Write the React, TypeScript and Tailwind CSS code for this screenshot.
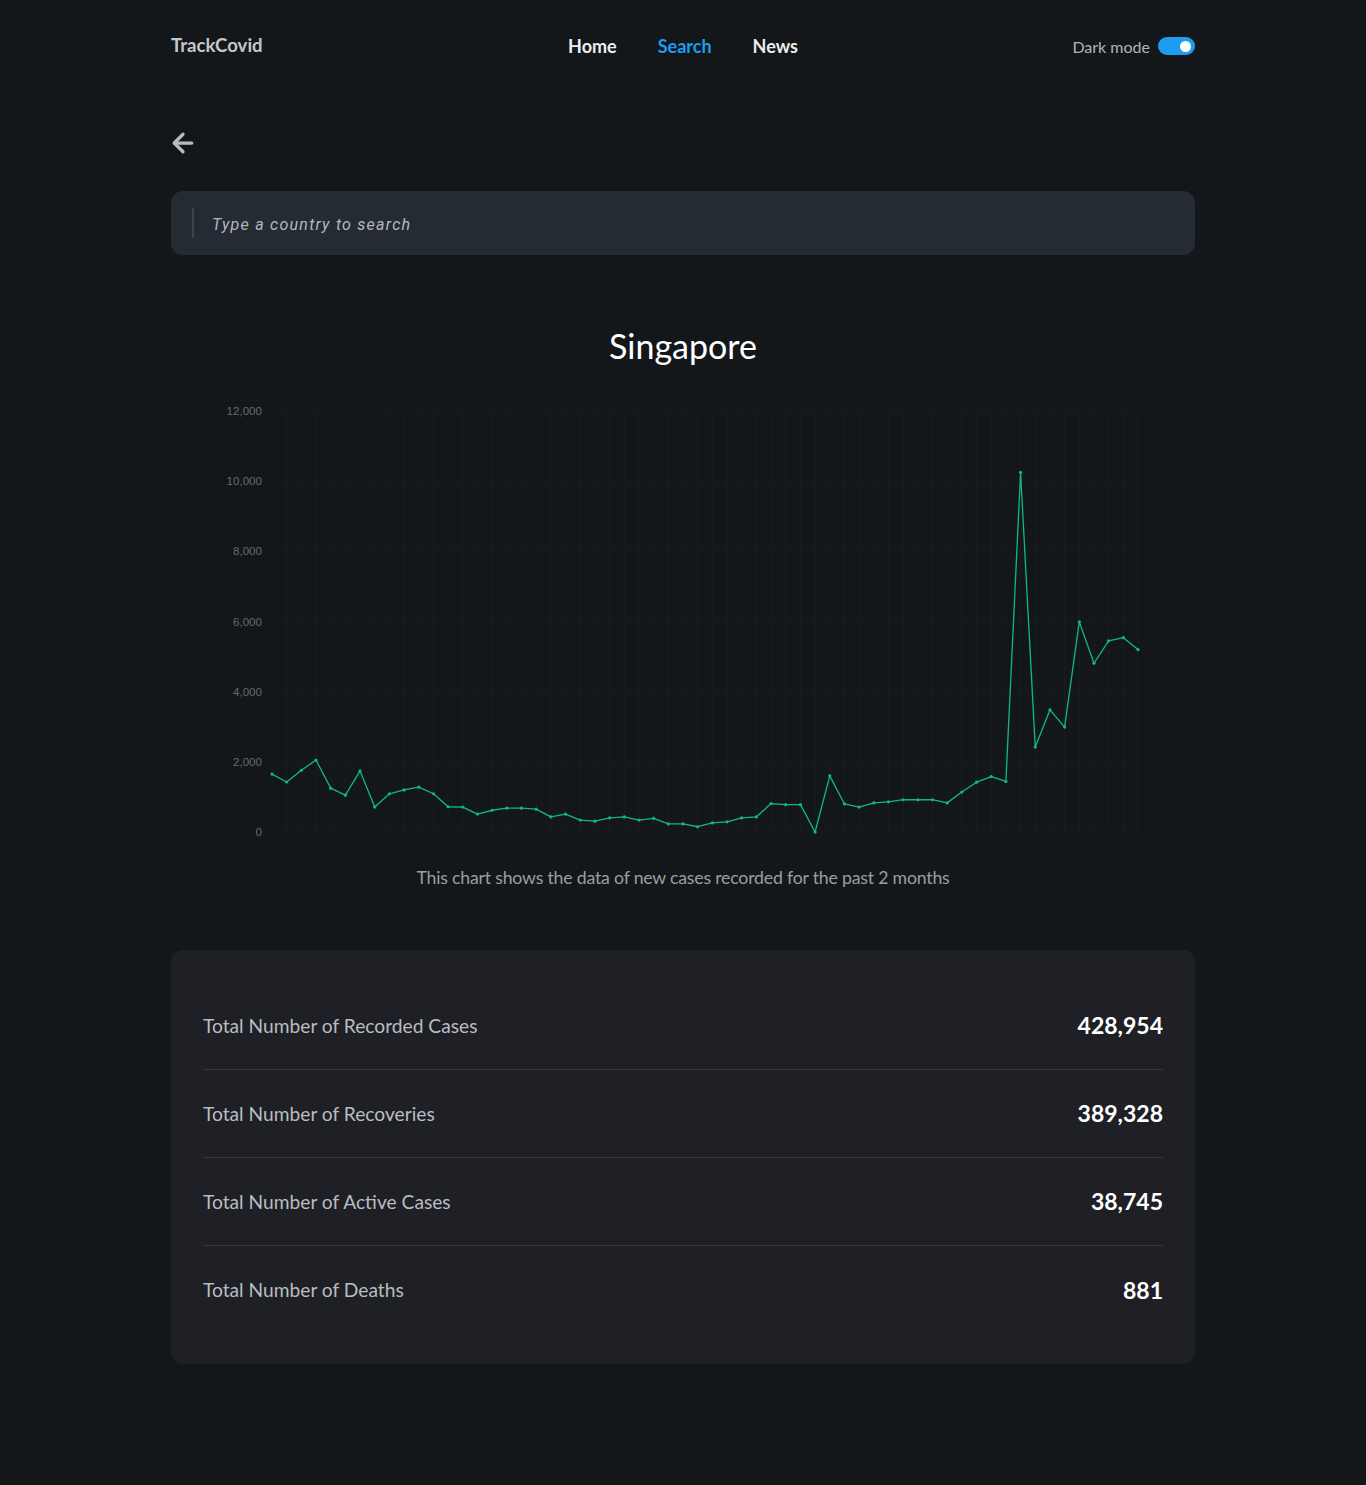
import { ArrowLeft } from "lucide-react";

// new cases, last 2 months
const cases = [
  1650, 1425, 1760, 2050, 1250, 1050, 1740, 710, 1090, 1200, 1280, 1090,
  720, 710, 510, 620, 680, 680, 650, 430, 510, 340, 310, 400, 430, 340,
  390, 230, 230, 150, 260, 290, 400, 430, 810, 780, 780, 0, 1600, 800,
  710, 830, 860, 920, 920, 920, 830, 1140, 1420, 1580, 1440, 10250, 2420,
  3480, 2990, 5990, 4810, 5450, 5540, 5200,
];

const ticks = [0, 2000, 4000, 6000, 8000, 10000, 12000];

// chart geometry in svg coords (svg is 1024 wide, starts at page y=400)
const X0 = 101;
const X1 = 967;
const Y0 = 432; // value 0
const PER = 0.03508; // px per case

function Chart() {
  const step = (X1 - X0) / (cases.length - 1);
  const pts = cases.map((v, i) => [X0 + i * step, Y0 - v * PER]);
  const line = pts.map((p) => p.join(",")).join(" ");
  return (
    <svg width={1024} height={445} className="block">
      {ticks.map((t) => {
        const y = Y0 - t * PER;
        return (
          <g key={t}>
            <line x1={X0} x2={X1} y1={y} y2={y} stroke="#181c20" strokeWidth={1} />
            <text
              x={91}
              y={y + 4}
              textAnchor="end"
              fontSize={11.6}
              fill="#65696d"
              fontFamily="Liberation Sans, Arial, sans-serif"
            >
              {t.toLocaleString("en-US")}
            </text>
          </g>
        );
      })}
      {pts.map((p, i) => (
        <line key={i} x1={p[0]} x2={p[0]} y1={Y0 - 12000 * PER} y2={Y0} stroke="#191d21" strokeWidth={1} />
      ))}
      <polyline points={line} fill="none" stroke="#10b981" strokeWidth={1.3} strokeLinejoin="round" />
      {pts.map((p, i) => (
        <circle key={i} cx={p[0]} cy={p[1]} r={1.6} fill="#10b981" />
      ))}
    </svg>
  );
}

const stats = [
  { label: "Total Number of Recorded Cases", value: "428,954" },
  { label: "Total Number of Recoveries", value: "389,328" },
  { label: "Total Number of Active Cases", value: "38,745" },
  { label: "Total Number of Deaths", value: "881" },
];

export default function App() {
  return (
    <div className="min-h-[1485px] bg-[#14171a] font-['Lato',sans-serif]">
      <div className="mx-auto w-[1024px]">
        <nav className="flex h-[92px] items-center justify-between">
          <span className="w-[200px] text-[18.6px] font-bold text-[#c3c7cb]">TrackCovid</span>
          <div className="flex items-center gap-[41px] text-[18px] font-bold">
            <span className="text-[#eceef0]">Home</span>
            <span className="text-[#1e9cf0]">Search</span>
            <span className="text-[#eceef0]">News</span>
          </div>
          <div className="flex w-[200px] items-center justify-end gap-2">
            <span className="pt-[2px] text-[16px] text-[#b0b4b8]">Dark mode</span>
            <span className="flex h-[18px] w-[37px] items-center justify-end rounded-full bg-[#1e9cf0] pr-[4px]">
              <span className="h-[11px] w-[11px] rounded-full bg-white" />
            </span>
          </div>
        </nav>

        <div className="mt-[36px] h-[28px]">
          <ArrowLeft size={30} strokeWidth={2.6} className="ml-[-3px] mt-[1px] text-[#b9bcbf]" />
        </div>

        <div className="mt-[35px] flex h-[64px] items-center rounded-[12px] bg-[#252b33] pl-[21px]">
          <span className="h-[30px] w-[2px] bg-[#3d444d]" />
          <span className="ml-[18px] pt-[3px] font-['Roboto',sans-serif] text-[16px] italic tracking-[1.25px] text-[#b3b8be]">
            Type a country to search
          </span>
        </div>

        <h1 className="mt-[68px] text-center text-[34px] leading-[46px] text-white">Singapore</h1>

        <div className="mt-[31px]">
          <Chart />
        </div>

        <p className="mt-[21px] text-center text-[17.7px] leading-[24px] tracking-[-0.2px] text-[#9a9ea2]">
          This chart shows the data of new cases recorded for the past 2 months
        </p>

        <div className="mt-[60px] rounded-[12px] bg-[#1e2025] px-8 pb-[30px] pt-[32px]">
          {stats.map((s, i) => (
            <div
              key={s.label}
              className={`flex h-[88px] items-center justify-between ${
                i < stats.length - 1 ? "border-b border-[#35383d]" : ""
              }`}
            >
              <span className="pt-[1px] text-[19.2px] text-[#b9bdc1]">{s.label}</span>
              <span className="text-[23px] font-bold text-white">{s.value}</span>
            </div>
          ))}
        </div>
      </div>
    </div>
  );
}
